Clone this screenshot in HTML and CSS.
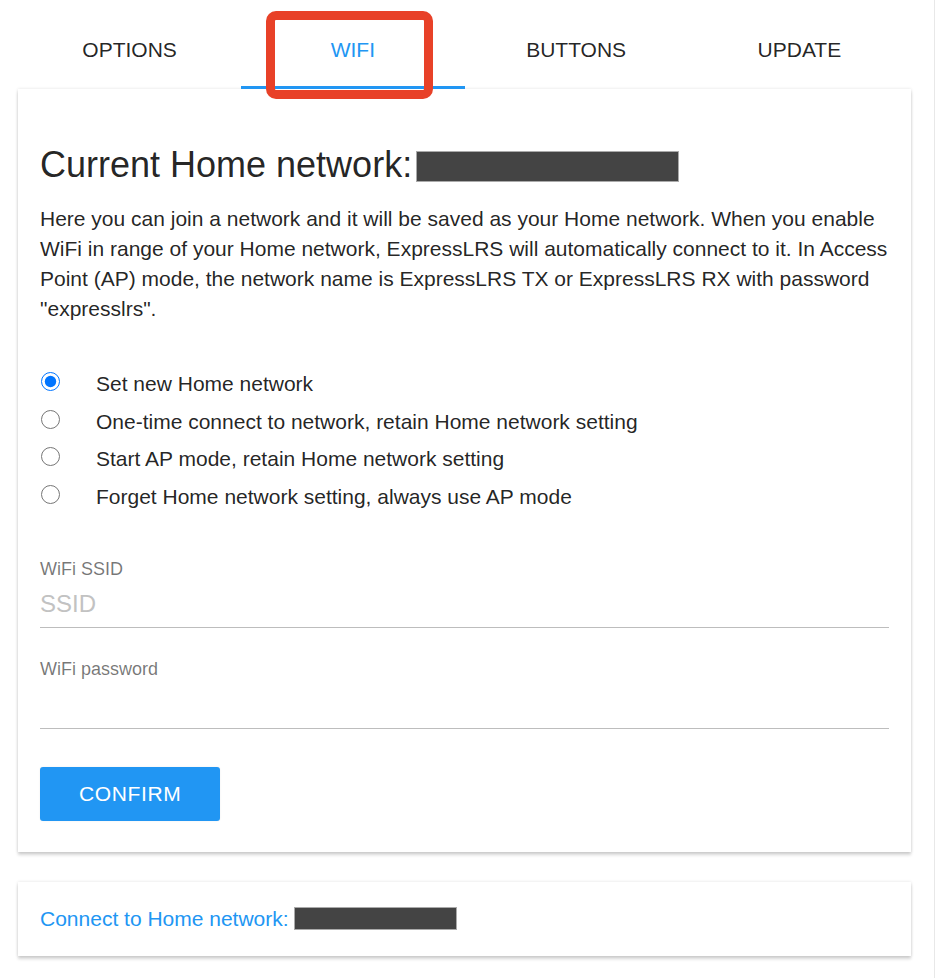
FILE: index.html
```html
<!DOCTYPE html>
<html lang="en">
<head>
  <meta charset="UTF-8">
  <meta name="viewport" content="width=device-width, initial-scale=1.0">
  <title>WiFi</title>
  <link rel="stylesheet" href="styles.css">
</head>
<body>
  <div class="page">
    <div class="highlight"></div>

    <ul class="tabs">
      <li><a href="#options">Options</a></li>
      <li class="active"><a href="#wifi">WiFi</a></li>
      <li><a href="#buttons">Buttons</a></li>
      <li><a href="#update">Update</a></li>
    </ul>

    <div class="panel">
      <h2>Current Home network:<span class="redact redact-big"></span></h2>
      <p>
        Here you can join a network and it will be saved as your Home network. When you enable
        WiFi in range of your Home network, ExpressLRS will automatically connect to it. In Access
        Point (AP) mode, the network name is ExpressLRS TX or ExpressLRS RX with password
        "expresslrs".
      </p>

      <form id="wifiForm">
        <div class="radios">
          <label class="radio"><input type="radio" name="mode" value="0" checked><span>Set new Home network</span></label>
          <label class="radio"><input type="radio" name="mode" value="1"><span>One-time connect to network, retain Home network setting</span></label>
          <label class="radio"><input type="radio" name="mode" value="2"><span>Start AP mode, retain Home network setting</span></label>
          <label class="radio"><input type="radio" name="mode" value="3"><span>Forget Home network setting, always use AP mode</span></label>
        </div>

        <div class="textfield">
          <label for="ssid">WiFi SSID</label>
          <input type="text" id="ssid" name="network" placeholder="SSID">
        </div>
        <div class="textfield">
          <label for="password">WiFi password</label>
          <input type="password" id="password" name="password">
        </div>

        <button type="submit" class="btn">Confirm</button>
      </form>
    </div>

    <div class="panel panel-small">
      <a href="#connect" class="link">Connect to Home network: <span class="redact redact-small"></span></a>
    </div>
  </div>
</body>
</html>
```

FILE: styles.css
```css
body {
  margin: 0;
  font-family: "Liberation Sans", Arial, sans-serif;
  color: rgba(0, 0, 0, 0.87);
  background-color: #fff;
}

.page {
  position: relative;
  width: 935px;
  min-height: 100vh;
  box-sizing: border-box;
  padding: 14px 23px 0 18px;
  border-right: 1px solid #e8e8e8;
}

/* red annotation drawn over the active tab */
.highlight {
  position: absolute;
  left: 266px;
  top: 11px;
  width: 167px;
  height: 88px;
  box-sizing: border-box;
  border: 9px solid #e84128;
  border-radius: 10px;
}

.tabs {
  display: flex;
  list-style: none;
  margin: 0;
  padding: 0;
}

.tabs li {
  flex: 1;
  text-align: center;
  border-bottom: 3px solid transparent;
}

.tabs li.active {
  border-bottom-color: #2196f3;
}

.tabs a {
  display: block;
  height: 72px;
  line-height: 72px;
  font-size: 21px;
  text-transform: uppercase;
  text-decoration: none;
  color: rgba(0, 0, 0, 0.87);
}

.tabs li.active a {
  color: #2196f3;
}

.panel {
  background: #fff;
  padding: 22px;
  margin-bottom: 30px;
  box-shadow: 0 3px 3px 0 rgba(0, 0, 0, 0.16), 0 0 3px 0 rgba(0, 0, 0, 0.12);
}

.panel h2 {
  margin: 30px 0 15px;
  font-size: 36px;
  font-weight: normal;
  line-height: 48px;
}

.panel p {
  margin: 0 0 44px;
  font-size: 21px;
  line-height: 30px;
}

.redact {
  display: inline-block;
  background: #444;
  border: 1px solid #aaa;
  box-sizing: border-box;
}

.redact-big {
  width: 263px;
  height: 31px;
  margin-left: 4px;
  vertical-align: -5px;
}

.redact-small {
  width: 163px;
  height: 23px;
  vertical-align: -4px;
}

.radios {
  display: flex;
  flex-direction: column;
  gap: 7.5px;
  margin-bottom: 47px;
}

.radio {
  display: flex;
  align-items: flex-start;
  height: 30px;
  font-size: 21px;
  line-height: 30px;
  cursor: pointer;
}

.radio span {
  padding-top: 1px;
}

.radio input {
  width: 19px;
  height: 19px;
  margin: 4px 36px 0 1px;
}

.textfield {
  margin-bottom: 30px;
}

.textfield label {
  display: block;
  font-size: 18px;
  line-height: 22.5px;
  color: rgba(0, 0, 0, 0.54);
}

.textfield input {
  display: block;
  width: 100%;
  height: 48px;
  box-sizing: border-box;
  padding: 0;
  border: none;
  border-bottom: 1.5px solid rgba(0, 0, 0, 0.26);
  font-family: inherit;
  font-size: 24px;
  color: rgba(0, 0, 0, 0.87);
  outline: none;
}

.textfield input::placeholder {
  color: #c2c2c2;
}

.btn {
  display: block;
  height: 54px;
  margin: 38px 0 9px;
  padding: 0 39px;
  border: none;
  border-radius: 3px;
  background: #2196f3;
  color: #fff;
  font-family: inherit;
  font-size: 21px;
  letter-spacing: 0.03em;
  text-transform: uppercase;
  cursor: pointer;
  box-shadow: 0 0 2px rgba(0, 0, 0, 0.08);
}

.panel-small {
  font-size: 21px;
  line-height: 30px;
}

.link {
  color: #2196f3;
  text-decoration: none;
}
```
